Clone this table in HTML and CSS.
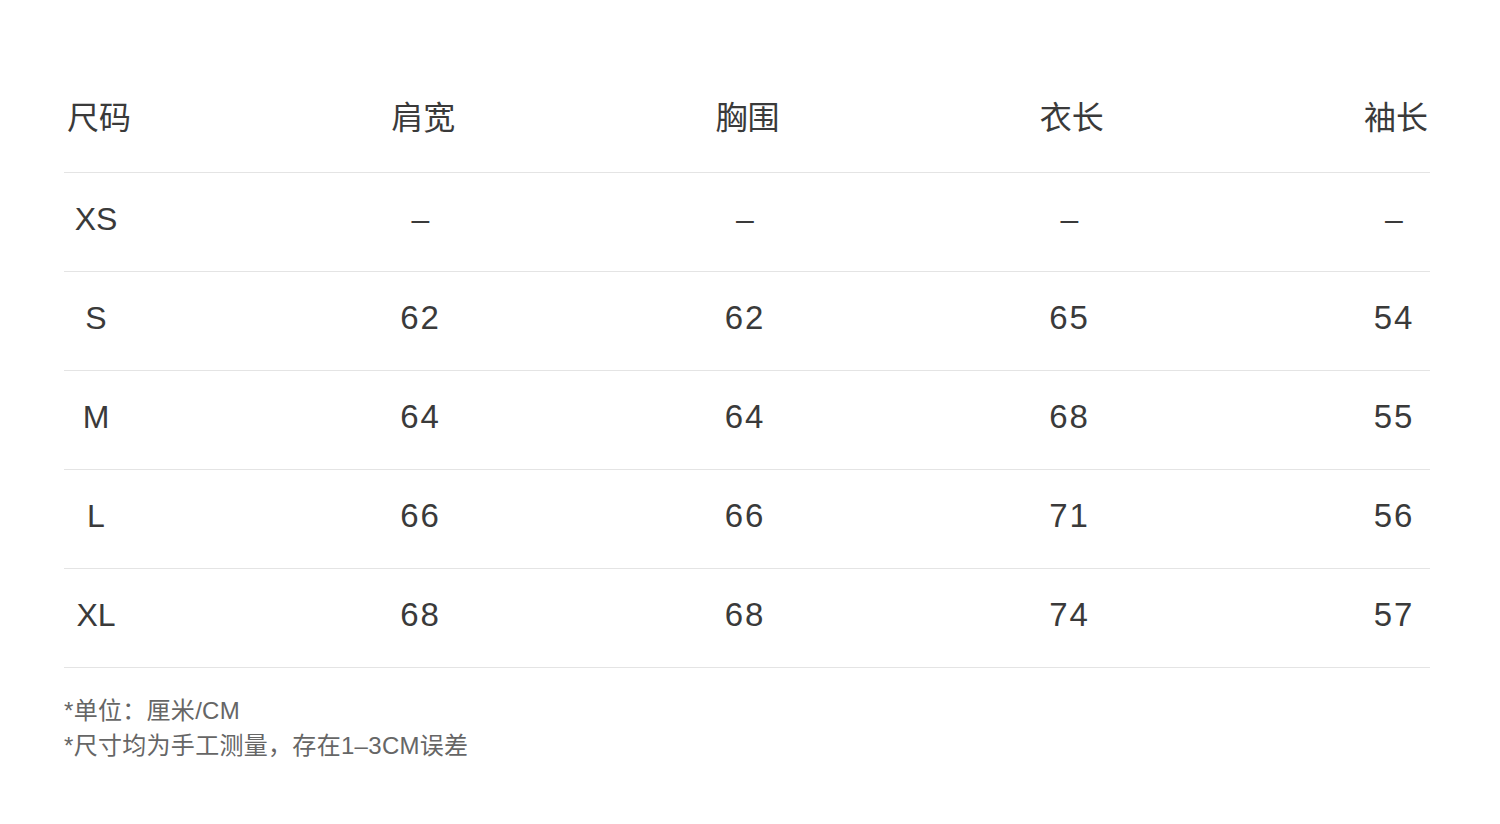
FILE: index.html
```html
<!DOCTYPE html>
<html lang="zh-CN">
<head>
<meta charset="utf-8">
<title>尺码表</title>
<link rel="stylesheet" href="styles.css">
</head>
<body>
<div class="page">
  <div class="table">
    <div class="row head">
      <div class="cell">尺码</div>
      <div class="cell">肩宽</div>
      <div class="cell">胸围</div>
      <div class="cell">衣长</div>
      <div class="cell">袖长</div>
    </div>
    <div class="row">
      <div class="cell">XS</div>
      <div class="cell">–</div>
      <div class="cell">–</div>
      <div class="cell">–</div>
      <div class="cell">–</div>
    </div>
    <div class="row">
      <div class="cell">S</div>
      <div class="cell num">62</div>
      <div class="cell num">62</div>
      <div class="cell num">65</div>
      <div class="cell num">54</div>
    </div>
    <div class="row">
      <div class="cell">M</div>
      <div class="cell num">64</div>
      <div class="cell num">64</div>
      <div class="cell num">68</div>
      <div class="cell num">55</div>
    </div>
    <div class="row">
      <div class="cell">L</div>
      <div class="cell num">66</div>
      <div class="cell num">66</div>
      <div class="cell num">71</div>
      <div class="cell num">56</div>
    </div>
    <div class="row">
      <div class="cell">XL</div>
      <div class="cell num">68</div>
      <div class="cell num">68</div>
      <div class="cell num">74</div>
      <div class="cell num">57</div>
    </div>
  </div>
  <div class="notes">
    <p>*单位：厘米/CM</p>
    <p>*尺寸均为手工测量，存在1–3CM误差</p>
  </div>
</div>
</body>
</html>
```

FILE: styles.css
```css
html, body {
  margin: 0;
  padding: 0;
  background: #ffffff;
}

body {
  font-family: "Liberation Sans", "Noto Sans CJK SC", sans-serif;
  color: #3a3a3a;
}

.page {
  width: 1366px;
  padding: 64px 0 0 64px;
}

.table {
  width: 1366px;
}

.row {
  display: grid;
  grid-template-columns: repeat(5, 64px);
  justify-content: space-between;
  align-items: center;
  padding-right: 4px;
  height: 98px;
  border-bottom: 1px solid #e4e4e4;
  font-size: 32px;
  line-height: 40px;
}

.row .cell {
  text-align: center;
  white-space: nowrap;
  padding-bottom: 6px;
}

.row .cell.num {
  font-size: 33px;
  letter-spacing: 2px;
}

.row.head {
  height: 108px;
  font-family: "Noto Sans CJK SC", "Liberation Sans", sans-serif;
  padding: 0 2px 0 3px;
}

.row.head .cell {
  padding-bottom: 6px;
}

.notes {
  margin-top: 25px;
  font-family: "Liberation Sans", "Noto Sans CJK SC", sans-serif;
  font-size: 24px;
  line-height: 35px;
  letter-spacing: 0.3px;
  color: #666666;
}

.notes p {
  margin: 0;
}
```
